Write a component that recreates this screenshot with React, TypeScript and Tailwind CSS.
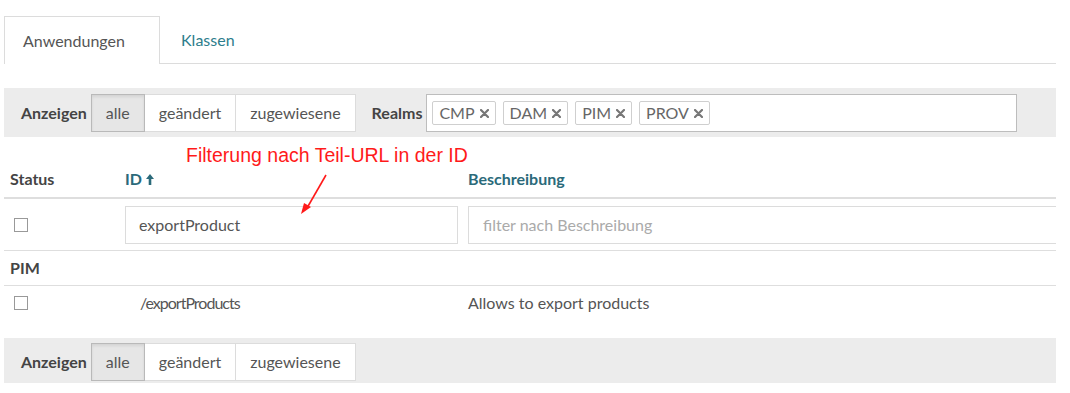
import React from "react";

const font = { fontFamily: "Lato, 'Open Sans', sans-serif" };

function ButtonGroup() {
  return (
    <div className="flex h-[38px] text-[16px] text-[#555]">
      <div className="flex items-center px-[14px] bg-[#e6e6e6] border border-[#b9b9b9] shadow-[inset_0_2px_3px_rgba(0,0,0,0.08)]">alle</div>
      <div className="flex items-center px-[14px] bg-white border-y border-r border-[#dcdcdc]">geändert</div>
      <div className="flex items-center px-[14px] bg-white border-y border-r border-[#dcdcdc]">zugewiesene</div>
    </div>
  );
}

function Tag({ label }: { label: string }) {
  return (
    <div className="flex items-center h-[24px] px-[6px] gap-[5px] border border-[#cfcfcf] rounded-[2px] text-[16px] text-[#666] bg-white">
      <span>{label}</span>
      <svg width="9" height="9" viewBox="0 0 9 9">
        <path d="M1 1 L8 8 M8 1 L1 8" stroke="#777" strokeWidth="2.2" strokeLinecap="round" />
      </svg>
    </div>
  );
}

function Checkbox() {
  return <div className="w-[14px] h-[14px] border border-[#999] bg-white" />;
}

export default function App() {
  return (
    <div className="w-[1070px] h-[393px] bg-white overflow-hidden" style={font}>
      <div className="pl-[4px] w-[1056px] pt-[16px]">
        {/* Tabs */}
        <div className="flex items-end h-[48px]">
          <div className="w-[156px] h-[48px] flex items-center pl-[18px] border-x border-t border-[#dcdcdc] bg-white text-[16px] text-[#555]">Anwendungen</div>
          <div className="flex-1 h-[48px] flex items-center pl-[21px] border-b border-[#dcdcdc] text-[16px] text-[#2d7d8c]">Klassen</div>
        </div>
        <div className="h-[24px]" />
        {/* Top toolbar */}
        <div className="bg-[#ececec] pt-[6px] pb-[5px] flex items-center">
          <span className="ml-[17px] mr-[4px] text-[16px] font-bold text-[#444]">Anzeigen</span>
          <ButtonGroup />
          <span className="ml-[16px] mr-[4px] text-[16px] font-bold text-[#444]">Realms</span>
          <div className="w-[591px] h-[38px] bg-white border border-[#bdbdbd] flex items-center gap-[7px] pl-[5px]">
            <Tag label="CMP" />
            <Tag label="DAM" />
            <Tag label="PIM" />
            <Tag label="PROV" />
          </div>
        </div>
        {/* Table */}
        <div className="relative">
          <div className="absolute left-[182px] top-[4px] text-[19.5px] text-[#ff1a1a] whitespace-nowrap" style={{ fontFamily: "'Liberation Sans', Arial, sans-serif" }}>
            Filterung nach Teil-URL in der ID
          </div>
          <svg className="absolute left-[290px] top-[35px]" width="40" height="45" viewBox="0 0 40 45">
            <line x1="32" y1="3" x2="13" y2="36" stroke="#ff1a1a" strokeWidth="1.6" />
            <polygon points="7,42 10,31 17,35" fill="#ff1a1a" />
          </svg>
          <div className="h-[60px] flex items-end pb-[6px] text-[16px] font-bold">
            <div className="w-[121px] pl-[6px] text-[#444]">Status</div>
            <div className="w-[343px] text-[#2b6a7a] flex items-center gap-[4px]">
              ID
              <svg width="8" height="11" viewBox="0 0 8 11"><polygon points="4,0 8,5 5.3,5 5.3,11 2.7,11 2.7,5 0,5" fill="#2b6a7a" /></svg>
            </div>
            <div className="text-[#2b6a7a]">Beschreibung</div>
          </div>
          <div className="h-[2px] bg-[#dedede]" />
          {/* filter row */}
          <div className="h-[51px] flex items-center">
            <div className="w-[121px] pl-[10px]"><Checkbox /></div>
            <div className="w-[343px]">
              <div className="w-[333px] h-[38px] border border-[#dcdcdc] flex items-center pl-[13px] text-[16px] text-[#555]">exportProduct</div>
            </div>
            <div className="flex-1 h-[38px] border-y border-l border-[#dcdcdc] flex items-center pl-[14px] text-[16px] text-[#aaa]">filter nach Beschreibung</div>
          </div>
          <div className="h-[1px] bg-[#dedede]" />
          <div className="h-[34px] flex items-center pl-[6px] text-[16px] font-bold text-[#444]">PIM</div>
          <div className="h-[1px] bg-[#dedede]" />
          <div className="h-[34px] flex items-center text-[16px] text-[#555]">
            <div className="w-[121px] pl-[10px]"><Checkbox /></div>
            <div className="w-[343px] pl-[15px] tracking-[-1px]">/exportProducts</div>
            <div>Allows to export products</div>
          </div>
          <div className="h-[18px]" />
          {/* Bottom toolbar */}
          <div className="bg-[#ececec] pt-[5px] pb-[2px] flex items-center">
            <span className="ml-[17px] mr-[4px] text-[16px] font-bold text-[#444]">Anzeigen</span>
            <ButtonGroup />
          </div>
        </div>
      </div>
    </div>
  );
}
